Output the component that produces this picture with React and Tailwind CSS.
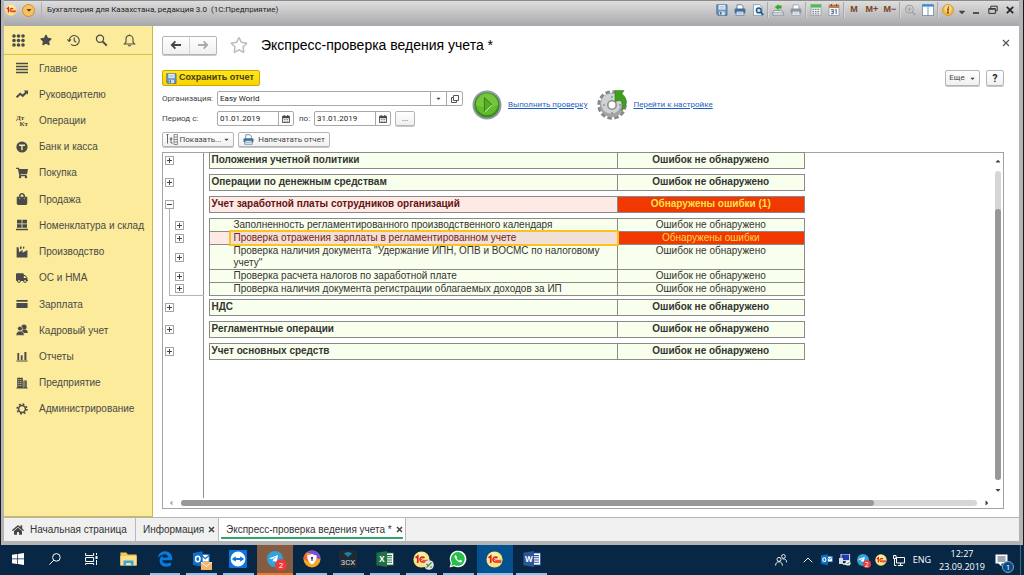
/**
 * App - accounting desktop: application window with the section sidebar,
 * the express check report and the system taskbar underneath.
 *
 * @component
 */
import React, { useState } from 'react'
import {
  FaStar, FaRegStar, FaShoppingCart, FaShoppingBag, FaTruck, FaHome, FaTelegramPlane, FaCaretDown, FaCaretUp, FaCaretLeft, FaCaretRight,
} from 'react-icons/fa'
import { FaEdgeLegacy } from 'react-icons/fa6'

/* ---------- Shared icons ---------- */

function OneC({ className }) {
  return (
    <svg viewBox="0 0 20 20" className={className} aria-hidden="true">
      <circle cx="10" cy="10" r="9.5" fill="#fbe27a" />
      <circle cx="9" cy="8" r="6.5" fill="#fdf0a8" />
      <path d="M3 8.2L5.6 6v8" fill="none" stroke="#d9201c" strokeWidth="2" />
      <path d="M13.6 8.2a3 3 0 1 0-2.4 4.8H18" fill="none" stroke="#d9201c" strokeWidth="1.8" />
      <path d="M12.2 9a1.2 1.2 0 1 0-1 2H18" fill="none" stroke="#d9201c" strokeWidth="1" />
    </svg>
  )
}

function Floppy({ className }) {
  return (
    <svg viewBox="0 0 12 12" className={className} aria-hidden="true">
      <path d="M1 .8h10v10.6H2L.8 10.2V.8z" fill="#6d93bd" stroke="#44698f" strokeWidth=".8" />
      <rect x="2.6" y="1" width="6.8" height="4.6" fill="#e9f1f8" />
      <path d="M3.6 2.6h4.8M3.6 4.1h4.8" stroke="#8fb0cf" strokeWidth=".7" />
      <rect x="3.2" y="7.4" width="5.6" height="3.8" fill="#d3dde6" />
      <rect x="4" y="8" width="1.5" height="2.6" fill="#44698f" />
    </svg>
  )
}

function Printer({ className, body = '#3f6d97' }) {
  return (
    <svg viewBox="0 0 12 12" className={className} aria-hidden="true">
      <path d="M3 5V.8h4.6L9 2.2V5" fill="#fff" stroke={body} strokeWidth=".8" />
      <rect x=".6" y="4.6" width="10.8" height="4.6" rx="1.2" fill={body} />
      <path d="M2.6 7.2h6.8l.8 4H1.8z" fill="#f2f6fa" stroke={body} strokeWidth=".7" />
      <path d="M3.4 9h5.2" stroke={body} strokeWidth=".6" />
    </svg>
  )
}

function CalendarIcon() {
  return (
    <svg viewBox="0 0 9 9" className="size-2" aria-hidden="true">
      <path d="M.5 1.5h8v7h-8z" fill="none" stroke="#444" />
      <path d="M.5 1.5h8V3.6h-8z" fill="#444" />
      <path d="M2.5 0v2M6.5 0v2" stroke="#444" strokeWidth="1.2" />
      <path d="M2 5h5M2 7h5" stroke="#444" strokeWidth="1" strokeDasharray="1 1" />
    </svg>
  )
}

/* ---------- Title bar ---------- */

const titleTools = [
  { id: 'Сохранить', icon: <Floppy className="size-3" /> },
  { id: 'Печать', icon: <Printer className="size-3" /> },
  {
    id: 'Предварительный просмотр',
    icon: (
      <svg viewBox="0 0 12 12" className="size-3">
        <path d="M1.4.6h6l2.6 2.6v8.2H1.4z" fill="#f7fafc" stroke="#7c93a8" strokeWidth=".8" />
        <circle cx="6.8" cy="6.4" r="2.4" fill="#bfe0f2" stroke="#1e5785" strokeWidth="1.4" />
        <path d="M8.6 8.2l2.6 2.8" stroke="#1e5785" strokeWidth="1.8" />
      </svg>
    ),
  },
  'sep',
  {
    id: 'Получить',
    icon: (
      <svg viewBox="0 0 12 12" className="size-3">
        <path d="M2.4 6.4h7.2l1.8 2.2v2.6H.6V8.6z" fill="#e4e7ea" stroke="#7f8a94" strokeWidth=".8" />
        <path d="M.8 8.8h10.4" stroke="#7f8a94" strokeWidth=".7" />
        <path d="M6.6.2v1.4h3v3h-3v1.6L2.8 3.1z" fill="#2faa2a" />
      </svg>
    ),
  },
  { id: 'Параметры печати', icon: <Printer className="size-3" body="#8b95a0" /> },
  'sep',
  {
    id: 'Калькулятор',
    icon: (
      <svg viewBox="0 0 12 12" className="size-3">
        <rect x="1" y=".6" width="10" height="11" fill="#eef0f2" stroke="#8d959c" strokeWidth=".7" />
        <rect x="1" y=".6" width="10" height="3" fill="#4fbf52" />
        <path d="M2.4 5.4h7.6M2.4 7.6h7.6M2.4 9.8h7.6" stroke="#7b858e" strokeWidth="1.3" strokeDasharray="1.6 .9" />
      </svg>
    ),
  },
  {
    id: 'Календарь',
    icon: (
      <svg viewBox="0 0 12 12" className="size-3">
        <rect x="1" y="1" width="10" height="10.4" fill="#f6f8fa" stroke="#8593a3" strokeWidth=".7" />
        <rect x="1" y="1" width="10" height="3" fill="#c9793a" />
        <path d="M3.4 0v2M8.6 0v2" stroke="#5a3a20" strokeWidth=".9" />
        <path d="M3 5.6h2.3v4.2H3M3.4 7.6h1.8M7 6.2l1.2-.8v4.6" fill="none" stroke="#3d5878" strokeWidth=".9" />
      </svg>
    ),
  },
  'sep',
  { id: 'M', label: 'M' },
  { id: 'M+', label: 'M+' },
  { id: 'M-', label: 'M−' },
  'sep',
  {
    id: 'Масштаб',
    icon: (
      <svg viewBox="0 0 12 12" className="size-3" fill="none" stroke="#9a9da1">
        <circle cx="5.4" cy="5.2" r="4" />
        <path d="M5.4 3v4.4M3.2 5.2h4.4" strokeWidth=".9" />
        <path d="M8.4 8.2l2.8 2.8" strokeWidth="1.4" />
      </svg>
    ),
  },
  {
    id: 'Панели',
    icon: (
      <svg viewBox="0 0 12 12" className="size-3">
        <rect x=".5" y=".6" width="11" height="10.8" fill="#fff" stroke="#6f8ba6" strokeWidth=".8" />
        <rect x=".5" y=".6" width="11" height="2" fill="#2f8be0" />
        <path d="M6 2.6v8.8" stroke="#6f8ba6" strokeWidth=".9" />
      </svg>
    ),
  },
  'sep',
  {
    id: 'О программе',
    icon: (
      <svg viewBox="0 0 12 12" className="size-3">
        <circle cx="6" cy="6" r="5.5" fill="#f6b93c" stroke="#c98a1c" strokeWidth=".7" />
        <circle cx="6" cy="4.6" r="3.6" fill="#fbd77e" />
        <path d="M6.4 2.4v1.3M5 5.2h1.4L5.6 9h1.2" fill="none" stroke="#5c4a28" strokeWidth="1.2" />
      </svg>
    ),
  },
]

function TitleBar() {
  return (
    <header className="h-[26px] shrink-0 border-t border-[#8b8b8b] bg-linear-to-b from-[#dedede] via-[#c3c3c5] to-[#a6a7aa]">
      <div className="flex h-[18px] items-center">
        <OneC className="mx-px size-3" />
        <button aria-label="Главное меню" className="ml-1 flex size-[13px] items-center justify-center rounded-full border border-[#d08f2c] bg-[#f8c062]">
          <FaCaretDown className="size-2 text-[#5d4526]" />
        </button>
        <span className="ml-1.5 h-4 w-px bg-[#b0b0b0]" />
        <h1 className="ml-[5px] grow truncate font-['Roboto',sans-serif] text-[8px] text-[#222]">
          Бухгалтерия для Казахстана, редакция 3.0&nbsp; (1С:Предприятие)
        </h1>
        {titleTools.map((t, i) =>
          t === 'sep' ? (
            <span key={i} className="h-4 w-0.5 shrink-0 border-l border-[#a9a9a9] bg-[#d5d5d5]" />
          ) : (
            <button key={t.id} aria-label={t.id} className="flex w-[18px] shrink-0 items-center justify-center text-[9px] font-bold text-[#7a4320]">
              {t.label || t.icon}
            </button>
          )
        )}
        <button aria-label="Ещё команды" className="flex w-2.5 shrink-0 justify-center pt-1"><FaCaretDown className="size-2.5 text-[#444]" /></button>
        <button aria-label="Свернуть" className="flex w-[18px] shrink-0 justify-center">
          <svg viewBox="0 0 10 10" className="size-2.5"><path d="M2 8h6" stroke="#333" strokeWidth="1.6" /></svg>
        </button>
        <button aria-label="Восстановить" className="flex w-4 shrink-0 justify-center">
          <svg viewBox="0 0 10 10" className="size-2.5" fill="none" stroke="#333">
            <path d="M2.8 3V1.2h6.4v4.6H7.6" />
            <path d="M.8 3.6h6.6v4.8H.8z" /><path d="M.8 4.2h6.6" />
          </svg>
        </button>
        <button aria-label="Закрыть" className="flex w-[18px] shrink-0 justify-center">
          <svg viewBox="0 0 10 10" className="size-2.5"><path d="M1.8 1.8l6.4 6.4M8.2 1.8L1.8 8.2" stroke="#222" strokeWidth="1.7" /></svg>
        </button>
      </div>
    </header>
  )
}

/* ---------- Sidebar ---------- */

const sections = [
  { name: 'Главное', icon: <path d="M0 1.5h12M0 4.5h12M0 7.5h12M0 10.5h12" stroke="currentColor" strokeWidth="1.4" /> },
  {
    name: 'Руководителю',
    icon: (
      <>
        <path d="M.6 9.4l3.6-3.6 2.6 2L10.6 4" fill="none" stroke="currentColor" strokeWidth="2" />
        <path d="M7.6 2.4H12v4.4z" />
      </>
    ),
  },
  {
    name: 'Операции',
    icon: (
      <g fontFamily="Liberation Serif, serif" fontWeight="700" fontSize="7">
        <text x="0" y="5">Дт</text>
        <text x="3.6" y="11.4">Кт</text>
      </g>
    ),
  },
  {
    name: 'Банк и касса',
    icon: (
      <>
        <circle cx="6" cy="6" r="5.6" />
        <path d="M3 4.2h6M6 4.2v5" stroke="#fbeb9b" strokeWidth="1.4" />
      </>
    ),
  },
  { name: 'Покупка', Icon: FaShoppingCart },
  { name: 'Продажа', Icon: FaShoppingBag },
  {
    name: 'Номенклатура и склад',
    icon: <path d="M1 .8h4.6v3.6H1zM6.4.8H11v3.6H6.4zM1 5.2h4.6v3.6H1zM6.4 5.2H11v3.6H6.4zM0 9.8h12v1.4H0z" />,
  },
  {
    name: 'Производство',
    icon: <path d="M.6 11.4V1.2h2l.5 5L6.6 3.8v3L11.4 4v7.4zM4 .6h1.6v2L4 3.4zM7 .8l1.2-.4.2 1.8L7 3z" />,
  },
  { name: 'ОС и НМА', Icon: FaTruck },
  { name: 'Зарплата', icon: <path d="M.4 2h11.2v1.8H.4zM.4 5h11.2v5H.4z" /> },
  {
    name: 'Кадровый учет',
    icon: (
      <>
        <circle cx="8" cy="3" r="2.6" />
        <path d="M5.6 9c0-3 1-3.6 2.6-3.6 2.4 0 3.6 1 3.6 3.6z" />
        <circle cx="4" cy="4.6" r="2.4" stroke="#fbeb9b" strokeWidth=".6" />
        <path d="M0 11.4C0 8.6 1.6 7 4 7s4.2 1.6 4.2 4.4z" stroke="#fbeb9b" strokeWidth=".6" />
      </>
    ),
  },
  { name: 'Отчеты', icon: <path d="M1.4 3h1.8v7H1.4zM4.8 5.2h1.8V10H4.8zM8.4 2h2v8h-2zM.4 10.4h11.2v1H.4z" /> },
  {
    name: 'Предприятие',
    icon: (
      <>
        <path d="M1.2.8h5.6v10.4H1.2zM7.4 3.4h3.4v7.8H7.4zM.4 10.6h11.2v.8H.4z" />
        <path d="M2.2 2.6h3.8M2.2 4.6h3.8M2.2 6.6h3.8M2.2 8.6h3.8M8 5h2.2M8 7h2.2M8 9h2.2" stroke="#fbeb9b" strokeWidth=".7" strokeDasharray="1.2 .6" />
      </>
    ),
  },
  {
    name: 'Администрирование',
    icon: (
      <>
        <circle cx="6" cy="6" r="3.4" fill="none" stroke="currentColor" strokeWidth="1.5" />
        <circle cx="6" cy="6" r="4.9" fill="none" stroke="currentColor" strokeWidth="1.6" strokeDasharray="1.8 2.05" />
      </>
    ),
  },
]

function Sidebar() {
  return (
    <aside className="w-[149px] shrink-0 border-r border-b border-[#c9b94a] bg-[#fbeb9b] text-[#4a4a4a]">
      <div className="flex h-[29px] items-center border-b border-[#d9c33a]">
        <button aria-label="Меню функций" className="flex w-7 justify-center">
          <svg viewBox="0 0 13 13" className="size-[13px]" fill="currentColor">
            {[2, 6.5, 11].map(y => [2, 6.5, 11].map(x => <circle key={`${x}-${y}`} cx={x} cy={y} r="1.8" />))}
          </svg>
        </button>
        <button aria-label="Избранное" className="flex w-[27px] justify-center"><FaStar className="size-3" /></button>
        <button aria-label="История" className="flex w-7 justify-center">
          <svg viewBox="0 0 13 13" className="size-[13px]" fill="none" stroke="currentColor" strokeWidth="1.1">
            <path d="M2.2 6.5A5 5 0 1 1 4 10.4" />
            <path d="M.4 5.4l1.8 2 1.8-2" />
            <path d="M7.2 3.6v3.2l2 1.4" />
          </svg>
        </button>
        <button aria-label="Поиск" className="flex w-7 justify-center">
          <svg viewBox="0 0 13 13" className="size-[13px]" fill="none" stroke="currentColor">
            <circle cx="5" cy="4.8" r="3.6" strokeWidth="1.2" />
            <path d="M7.8 7.6l4 4" strokeWidth="2" />
          </svg>
        </button>
        <button aria-label="Уведомления" className="flex w-7 justify-center">
          <svg viewBox="0 0 13 13" className="size-[13px]" fill="none" stroke="currentColor" strokeWidth="1.1">
            <path d="M1.4 10h10.2L10 8V5a3.5 3.5 0 0 0-7 0v3z" />
            <path d="M6.5.4v1.4M5 11.8h3" />
          </svg>
        </button>
      </div>
      <nav>
        <ul className="grid h-[367px] auto-rows-fr">
          {sections.map(({ name, icon, Icon }) => (
            <li key={name} className="flex">
              <a href="#" className="flex items-center gap-[11px] pl-3 text-[10px] whitespace-nowrap">
                {Icon ? (
                  <Icon className="size-3" />
                ) : (
                  <svg viewBox="0 0 12 12" className="size-3 shrink-0" fill="currentColor" aria-hidden="true">{icon}</svg>
                )}
                {name}
              </a>
            </li>
          ))}
        </ul>
      </nav>
    </aside>
  )
}

/* ---------- Report ---------- */

const OK = 'Ошибок не обнаружено'

const report = [
  { name: 'Положения учетной политики', status: OK },
  { name: 'Операции по денежным средствам', status: OK },
  {
    name: 'Учет заработной платы сотрудников организаций',
    status: 'Обнаружены ошибки (1)',
    error: true,
    checks: [
      { name: 'Заполненность регламентированного производственного календаря', status: OK },
      { name: 'Проверка отражения зарплаты в регламентированном учете', status: 'Обнаружены ошибки', error: true },
      { name: 'Проверка наличия документа "Удержание ИПН, ОПВ и ВОСМС по налоговому учету"', status: OK, tall: true },
      { name: 'Проверка расчета налогов по заработной плате', status: OK },
      { name: 'Проверка наличия документа регистрации облагаемых доходов за ИП', status: OK },
    ],
  },
  { name: 'НДС', status: OK },
  { name: 'Регламентные операции', status: OK },
  { name: 'Учет основных средств', status: OK },
]

function Toggle({ open, onClick, label }) {
  return (
    <button onClick={onClick} aria-label={label} className="block size-[9px] shrink-0 border border-[#a5a5a5] bg-white">
      <svg viewBox="0 0 7 7" className="size-[7px]" stroke="#444">
        <path d={open ? 'M1 3.5h5' : 'M1 3.5h5M3.5 1v5'} />
      </svg>
    </button>
  )
}

function GroupRows({ group }) {
  const [open, setOpen] = useState(Boolean(group.checks))
  const checks = open && group.checks ? group.checks : []
  return (
    <tbody>
      <tr className="h-4">
        <td colSpan={2} className="border-r border-[#8f8f8f] align-top">
          <div className="flex h-4 flex-col items-start pt-[3px] pl-0.5">
            <Toggle open={checks.length > 0} onClick={() => setOpen(!open)} label={group.name} />
            {checks.length > 0 && <span className="ml-1 w-px grow bg-[#b5b5b5]" />}
          </div>
        </td>
        <td />
        <td className={`border border-[#8a8a8a] pt-px pl-0.5 align-top font-bold ${group.error ? 'bg-[#ffe9e4] text-[#5f1414]' : 'bg-[#f8ffec]'}`}>
          {group.name}
        </td>
        <td className={`border border-[#8a8a8a] pt-px text-center align-top font-bold ${group.error ? 'bg-[#f03800] text-[#ffe04a]' : 'bg-[#f8ffec]'}`}>
          {group.status}
        </td>
      </tr>
      <tr className="h-1.5">
        <td />
        <td className={`border-r border-r-[#8f8f8f] ${checks.length ? 'border-l border-l-[#b5b5b5]' : ''}`} />
        <td colSpan={3} />
      </tr>
      {checks.map((c, i) => (
        <tr key={c.name} className={c.tall ? 'h-[25px]' : 'h-[13px]'}>
          <td />
          <td className={`border-r border-l border-r-[#8f8f8f] border-l-[#b5b5b5] pl-[5px] align-middle ${i === checks.length - 1 ? 'border-b border-b-[#b5b5b5]' : ''}`}>
            <Toggle label={c.name} />
          </td>
          <td />
          <td className={`border border-[#8a8a8a] pl-6 align-top ${c.error ? 'relative bg-[#ffe9e4] text-[#7a2020]' : 'bg-[#f8ffec]'}`}>
            {c.error && <span className="absolute -inset-y-0.5 -right-0.5 left-[19px] border-2 border-[#fbc31f] bg-[#d8d0c0]/35" />}
            <span className="relative block">{c.name}</span>
          </td>
          <td className={`border border-[#8a8a8a] text-center align-top ${c.error ? 'bg-[#f03800] text-[#ffd94a]' : 'bg-[#f8ffec]'}`}>
            {c.status}
          </td>
        </tr>
      ))}
      {checks.length > 0 && (
        <tr className="h-1">
          <td colSpan={2} className="border-r border-[#8f8f8f]" />
          <td colSpan={3} />
        </tr>
      )}
    </tbody>
  )
}

function Report() {
  return (
    <section className="flex min-h-0 grow flex-col border border-[#a3a3a3]">
      <div className="flex min-h-0 grow">
        <div className="-mt-px flex min-w-0 grow flex-col">
          <table className="w-[642px] table-fixed border-collapse text-[10px] leading-3 text-[#333]">
            <colgroup>
              <col className="w-1.5" />
              <col className="w-[34px]" />
              <col className="w-1.5" />
              <col className="w-[408px]" />
              <col />
            </colgroup>
            {report.map(g => <GroupRows key={g.name} group={g} />)}
          </table>
          {/* Outline gutter below the last row */}
          <div className="w-[41px] grow border-r border-[#8f8f8f]" />
        </div>
        {/* Vertical scrollbar */}
        <div className="flex w-2.5 flex-col items-center pt-1">
          <FaCaretUp className="size-2 text-[#444]" />
          <div className="my-1.5 flex w-1.5 grow flex-col rounded-full bg-[#d6d6d6] pt-[38px]">
            <div className="grow rounded-full bg-[#989898]" />
          </div>
          <FaCaretDown className="mb-1 size-2 text-[#444]" />
        </div>
      </div>
      {/* Horizontal scrollbar */}
      <div className="flex h-2.5 shrink-0 items-center pr-3 pl-1">
        <FaCaretLeft className="size-2 text-[#b0b0b0]" />
        <div className="mx-1.5 flex h-1.5 grow rounded-full bg-[#d6d6d6]">
          <div className="w-[87%] rounded-full bg-[#989898]" />
        </div>
        <FaCaretRight className="size-2 text-[#444]" />
      </div>
    </section>
  )
}

/* ---------- Main form ---------- */

const button = 'flex items-center justify-center rounded-xs border border-[#b5b5b5] bg-linear-to-b from-white to-[#f0f0f0] shadow-[0_1px_0_#c9c9c9]'

function DateField({ id, value }) {
  return (
    <div className="flex h-[15px] w-[77px] rounded-xs border border-[#a9a9a9] bg-white">
      <input id={id} defaultValue={value} className="w-[60px] min-w-0 pl-0.5 text-[#222] outline-none" />
      <button aria-label="Выбрать дату" className="flex grow items-center justify-center border-l border-[#a9a9a9]"><CalendarIcon /></button>
    </div>
  )
}

function MainForm() {
  return (
    <main className="flex min-w-0 grow flex-col bg-white pt-2 pr-[15px] pb-2 pl-[9px] font-['Roboto',sans-serif] text-[8px] text-[#444]">
      {/* Heading */}
      <div className="flex h-[22px] items-center font-['Liberation_Sans',sans-serif]">
        <div className="flex h-[19px] w-[55px] rounded-xs border border-[#b5b5b5] bg-linear-to-b from-white to-[#f0f0f0] shadow-[0_1px_0_#c9c9c9]">
          {[['Назад', '#444', 'M11 5H2M5.4 1.4L1.8 5l3.6 3.6'], ['Вперед', '#aaa', 'M1 5h9M6.6 1.4L10.2 5 6.6 8.6']].map(([name, color, d]) => (
            <button key={name} aria-label={name} className="flex flex-1 items-center justify-center border-[#d5d5d5] first:border-r">
              <svg viewBox="0 0 12 10" className="h-2.5 w-3" fill="none" stroke={color} strokeWidth="1.8"><path d={d} /></svg>
            </button>
          ))}
        </div>
        <button aria-label="В избранное" className="ml-[13px]">
          <FaRegStar className="size-[18px] text-[#b9bec6]" />
        </button>
        <h2 className="ml-[13px] grow text-[14px] text-black">Экспресс-проверка ведения учета *</h2>
        <button aria-label="Закрыть форму" className="-mr-1.5 mb-1">
          <svg viewBox="0 0 8 8" className="size-2" stroke="#555" strokeWidth="1.2"><path d="M1 1l6 6M7 1L1 7" /></svg>
        </button>
      </div>

      {/* Commands */}
      <div className="mt-3.5 flex items-center gap-1.5">
        <button className="flex h-4 w-[98px] items-center gap-0.5 rounded-xs border border-[#c9a800] bg-linear-to-b from-[#ffe61a] to-[#f6d400] pl-[3px] font-['Liberation_Sans',sans-serif] text-[9px] font-bold whitespace-nowrap text-[#443c10]">
          <Floppy className="size-[11px] shrink-0" />
          Сохранить отчет
        </button>
        <span className="grow" />
        <button className={`${button} h-4 w-[35px] gap-1`}>Еще <FaCaretDown className="size-[7px]" /></button>
        <button className={`${button} h-4 w-[18px] text-[10px] font-bold text-[#222]`}>?</button>
      </div>

      {/* Parameters */}
      <div className="mt-1 flex h-[37px] items-start">
        <div className="flex w-[302px] shrink-0 flex-col gap-[5px] pt-px">
          <div className="flex h-[15px] items-center">
            <label htmlFor="org" className="w-[55px]">Организация:</label>
            <div className="flex h-[15px] w-[246px] rounded-xs border border-[#a9a9a9] bg-white">
              <input id="org" defaultValue="Easy World" className="min-w-0 grow pl-0.5 text-[#222] outline-none" />
              <button aria-label="Выбрать из списка" className="flex w-4 items-center justify-center border-l border-[#a9a9a9]"><FaCaretDown className="size-[7px]" /></button>
              <button aria-label="Открыть" className="flex w-4 items-center justify-center border-l border-[#a9a9a9]">
                <svg viewBox="0 0 8 8" className="size-2" fill="none" stroke="#555"><path d="M2.5.5h5v5h-5zM2.5 2.5h-2v5h5v-2" /></svg>
              </button>
            </div>
          </div>
          <div className="flex h-[15px] items-center">
            <label htmlFor="from" className="w-[55px]">Период с:</label>
            <DateField id="from" value="01.01.2019" />
            <label htmlFor="to" className="w-5 pl-[5px]">по:</label>
            <DateField id="to" value="31.01.2019" />
            <button className={`${button} ml-1 h-[15px] w-5`} aria-label="Выбрать период">...</button>
          </div>
        </div>
        <div className="flex items-center gap-1.5 pl-2">
          <svg viewBox="0 0 30 30" className="size-[30px]" aria-hidden="true">
            <circle cx="15" cy="15" r="14.5" fill="#8e9bad" />
            <circle cx="15" cy="15" r="12.6" fill="#3d8f1a" />
            <circle cx="15" cy="14" r="11" fill="#62bb2b" />
            <path d="M4 15a11 11 0 0 1 22 0c-6 3-16 3-22 0z" fill="#8ad24f" opacity=".5" />
            <path d="M12.4 7.6v14.8l8-7.4z" fill="#55ab25" stroke="#2d7411" strokeWidth=".8" />
            <path d="M12.4 22.4l8-7.4" stroke="#d9f5c4" />
          </svg>
          <a href="#" className="text-[#1f5fc4] underline">Выполнить проверку</a>
        </div>
        <div className="flex items-center gap-1.5 pl-2.5">
          <svg viewBox="0 0 30 30" className="size-[30px]" aria-hidden="true">
            <circle cx="15" cy="15" r="13" fill="none" stroke="#85878a" strokeWidth="3.4" strokeDasharray="4.4 2.4" />
            <circle cx="15" cy="15" r="12.2" fill="#a2a4a6" />
            <circle cx="14" cy="13.6" r="10" fill="#cfd1d3" />
            <circle cx="15" cy="15" r="5" fill="#8d8f91" />
            <circle cx="15" cy="15" r="3.4" fill="#fff" />
            <g fill="#8d8f91"><circle cx="15" cy="7" r=".9" /><circle cx="7" cy="15" r=".9" /><circle cx="15" cy="23" r=".9" /><circle cx="23" cy="15" r=".9" /></g>
            <path d="M18 .5h9l-2 3.2C31 8.6 31 16 24.4 20.6c2-4.6 1.4-8.2-1-10.2L18 11.5z" fill="#3f9d20" stroke="#2d7411" strokeWidth=".5" />
          </svg>
          <a href="#" className="text-[#1f5fc4] underline">Перейти к настройке</a>
        </div>
      </div>

      {/* Report commands */}
      <div className="my-[5px] flex gap-1">
        <button className={`${button} h-[15px] w-[72px] gap-0.5`}>
          <svg viewBox="0 0 12 11" className="h-[11px] w-3" fill="none" stroke="#666" aria-hidden="true">
            <path d="M.5.5h2M1.5.5v9M5 3v6h1.6M3.6 5h3" />
            <path d="M8 .5h3.4v10H8zM8 3h3.4M8 5.5h3.4M8 8h3.4" strokeWidth=".7" />
          </svg>
          Показать... <FaCaretDown className="size-[7px]" />
        </button>
        <button className={`${button} h-[15px] w-[92px] gap-1`}>
          <Printer className="size-[11px]" />
          Напечатать отчет
        </button>
      </div>

      <div className="flex min-h-0 grow flex-col font-['Liberation_Sans',sans-serif]">
        <Report />
      </div>
    </main>
  )
}

/* ---------- Window tabs ---------- */

function TabClose({ name }) {
  return (
    <button aria-label={`Закрыть ${name}`}>
      <svg viewBox="0 0 7 7" className="size-[7px]" stroke="#444" strokeWidth="1.5"><path d="M1 1l5 5M6 1L1 6" /></svg>
    </button>
  )
}

function WindowTabs() {
  return (
    <nav className="flex h-6 shrink-0 border-t border-[#b5b5b5] bg-[#f0f0f0] text-[10px] text-[#333]">
      <a href="#" className="flex w-[132px] items-center gap-1.5 border-r border-[#b9b9b9] pl-2">
        <FaHome className="size-3 text-[#444]" />
        Начальная страница
      </a>
      <div className="flex w-[83px] items-center gap-1 border-r border-[#b9b9b9] pl-[7px]">
        <a href="#">Информация</a>
        <TabClose name="Информация" />
      </div>
      <div className="flex w-[187px] flex-col border-r border-[#b9b9b9] bg-white px-0.5 pt-1 pb-0.5">
        <div className="flex grow items-center gap-1 pl-[5px] whitespace-nowrap">
          <a href="#">Экспресс-проверка ведения учета *</a>
          <TabClose name="Экспресс-проверка" />
        </div>
        <div className="h-0.5 bg-[#2fa567]" />
      </div>
    </nav>
  )
}

/* ---------- Taskbar ---------- */

function OutlookIcon({ className }) {
  return (
    <svg viewBox="0 0 20 20" className={className} aria-hidden="true">
      <path d="M10 4h9v9h-9z" fill="#fff" stroke="#0f6fc6" />
      <path d="M10 5l4.5 4L19 5" fill="none" stroke="#0f6fc6" strokeWidth="1.4" />
      <path d="M0 2.4L11.4.4v18.2L0 16.4z" fill="#0f6fc6" />
      <ellipse cx="5.6" cy="9.4" rx="2.6" ry="3.2" fill="none" stroke="#fff" strokeWidth="1.8" />
    </svg>
  )
}

function Office({ letter, color }) {
  return (
    <svg viewBox="0 0 18 16" className="h-4 w-[18px]" aria-hidden="true">
      <rect x="9" y="2" width="8.4" height="12" fill="#fff" stroke={color} strokeWidth=".8" />
      <path d="M11 4.6h5M11 6.8h5M11 9h5M11 11.2h5" stroke={color} strokeWidth="1.1" />
      <path d="M.4 1.8L11 0v16L.4 14.2z" fill={color} />
      <text x="5.8" y="11.2" fontSize="8" fontWeight="700" fill="#fff" textAnchor="middle" fontFamily="Open Sans, sans-serif">{letter}</text>
    </svg>
  )
}

function TelegramBadge({ className, badge }) {
  return (
    <span className={`relative flex items-center justify-center rounded-full bg-[#2fa3dd] ${className}`}>
      <FaTelegramPlane className="mr-0.5 size-3/5 text-white" />
      <span className={`absolute flex items-center justify-center rounded-full bg-[#e83c3c] leading-none text-white ${badge}`}>2</span>
    </span>
  )
}

const apps = [
  {
    name: 'Пуск',
    icon: <svg viewBox="0 0 12 12" className="size-3" fill="#fff"><path d="M0 1.7l5-.7v4.6H0zM5.7.9L12 0v5.6H5.7zM0 6.3h5v4.6l-5-.7zM5.7 6.3H12V12l-6.3-.9z" /></svg>,
  },
  {
    name: 'Поиск',
    icon: <svg viewBox="0 0 12 12" className="size-3" fill="none" stroke="#fff"><circle cx="7.4" cy="4.4" r="3.8" /><path d="M4.8 7.2L.4 11.6" /></svg>,
  },
  {
    name: 'Представление задач',
    icon: (
      <svg viewBox="0 0 13 12" className="h-3 w-[13px]" fill="none" stroke="#fff">
        <path d="M.6 0v2.5h8V0M.6 4.5h8v4h-8zM.6 12v-1.5h8V12M11.5 0v2M11.5 7v5" />
        <path d="M11.5 3v3" strokeWidth="2" />
      </svg>
    ),
  },
  {
    name: 'Проводник',
    icon: (
      <svg viewBox="0 0 17 14" className="h-3.5 w-[17px]">
        <path d="M.4.6h6l1.4 1.8h8.8v11H.4z" fill="#f3c64e" />
        <path d="M.4 4h16.2v9.4H.4z" fill="#fbe08a" />
        <path d="M3.5 14V8.5h10V14h-2.6v-3H6.1v3z" fill="#3fa4dc" />
      </svg>
    ),
  },
  { name: 'Edge', open: true, icon: <FaEdgeLegacy className="size-4 text-[#0a7bdc]" /> },
  {
    name: 'Outlook',
    open: true,
    icon: (
      <span className="relative">
        <OutlookIcon className="size-[17px]" />
        <svg viewBox="0 0 11 8" className="absolute -right-0.5 -bottom-0.5 h-2 w-[11px]">
          <rect width="11" height="8" fill="#f2b768" /><path d="M0 0l5.5 4.5L11 0" fill="none" stroke="#fff2dc" />
        </svg>
      </span>
    ),
  },
  {
    name: 'TeamViewer',
    open: true,
    icon: (
      <svg viewBox="0 0 18 18" className="size-[18px]">
        <rect width="18" height="18" rx="1" fill="#0d73dd" />
        <circle cx="9" cy="9" r="7.4" fill="#fff" />
        <path d="M2.8 9l4-2.8v1.9h4.4V6.2l4 2.8-4 2.8V9.9H6.8v1.9z" fill="#0d73dd" />
      </svg>
    ),
  },
  { name: 'Telegram', open: true, alert: true, icon: <TelegramBadge className="size-4" badge="-right-1 -bottom-1 size-3 text-[8px]" /> },
  {
    name: 'Браузер',
    open: true,
    icon: (
      <svg viewBox="0 0 18 18" className="size-[18px]">
        <circle cx="9" cy="9" r="8.5" fill="#f5a623" />
        <path d="M3 3a8.5 8.5 0 0 1 14.4 5c-1 2-3 1-4-1S7 3 3 3z" fill="#7b4fe0" />
        <path d="M.5 9A8.5 8.5 0 0 1 4 2.2C3 6 4 9 6 12z" fill="#f0603a" />
        <path d="M9 4c1.6 1 3.2 1.2 4.6 1.2 0 4.6-1 7.2-4.6 9.2-3.6-2-4.6-4.6-4.6-9.2C5.8 5.2 7.4 5 9 4z" fill="#fff" />
        <circle cx="9" cy="8" r="1.2" fill="#5b3a9c" /><path d="M9 8v3" stroke="#5b3a9c" strokeWidth="1.2" />
      </svg>
    ),
  },
  {
    name: '3CX',
    open: true,
    icon: (
      <svg viewBox="0 0 18 18" className="size-[18px]">
        <rect width="18" height="18" rx="1.5" fill="#1f2a33" />
        <path d="M5 3.5a6 6 0 0 1 8 0L9 7z" fill="#1a7fae" />
        <text x="9" y="15" fontSize="8" fill="#d6dde2" textAnchor="middle" fontFamily="Roboto, sans-serif">3CX</text>
      </svg>
    ),
  },
  { name: 'Excel', open: true, icon: <Office letter="X" color="#1f7145" /> },
  {
    name: '1С конфигуратор',
    open: true,
    icon: (
      <span className="relative">
        <OneC className="size-[17px]" />
        <svg viewBox="0 0 10 10" className="absolute -right-1 -bottom-0.5 size-2.5">
          <circle cx="5" cy="5" r="4.8" fill="#e3e3e3" /><path d="M2.5 7.5l5-5M2.5 4l2 2M6 7h2" stroke="#4c8b2c" strokeWidth="1.2" />
        </svg>
      </span>
    ),
  },
  {
    name: 'WhatsApp',
    open: true,
    icon: (
      <svg viewBox="0 0 18 18" className="size-[18px]">
        <path d="M.6 17.4L1.8 13A8.3 8.3 0 1 1 5 16.2z" fill="#fff" />
        <path d="M2.2 15.8l.9-3A6.9 6.9 0 1 1 5.3 14.9z" fill="#27c04b" />
        <path d="M6.6 5c-1 .4-1.3 1.5-.8 2.8 1 2.3 2.6 3.8 4.8 4.5 1.3.4 2.4-.2 2.6-1.5l-2-1-.9 1C9 10.2 8.2 9.4 7.6 8.2l.7-.9z" fill="#fff" />
      </svg>
    ),
  },
  { name: '1С:Предприятие', open: true, active: true, icon: <OneC className="size-[17px]" /> },
  { name: 'Word', open: true, icon: <Office letter="W" color="#2b579a" /> },
]

function appClass(app) {
  if (app.alert) return 'border-[#f07a1c] bg-[#855c42]'
  if (app.active) return 'border-[#8cc4f0] bg-[#05508f]'
  if (app.open) return 'mx-[3px] border-[#8cc4f0]'
  return 'border-transparent'
}

function Taskbar() {
  return (
    <footer className="flex h-[30px] shrink-0 items-stretch bg-[#082745] font-['Open_Sans',sans-serif] text-white">
      <div className="grid w-[550px] auto-cols-fr grid-flow-col">
        {apps.map(app => (
          <button key={app.name} aria-label={app.name} className={`flex items-center justify-center border-b-2 ${appClass(app)}`}>
            {app.icon}
          </button>
        ))}
      </div>
      <span className="grow" />
      <div className="flex items-center">
        <button aria-label="Контакты" className="mr-4">
          <svg viewBox="0 0 12 12" className="size-3" fill="none" stroke="#fff" strokeWidth=".9">
            <circle cx="4" cy="5.4" r="2" /><path d="M.6 11.6C.6 9 2 7.8 4 7.8s3.4 1.2 3.4 3.8" />
            <circle cx="8.4" cy="2.4" r="1.9" /><path d="M7.6 5c2.4-.6 4 .8 4 3.4" />
          </svg>
        </button>
        <button aria-label="Скрытые значки" className="mr-2">
          <svg viewBox="0 0 10 6" className="h-1.5 w-2.5" fill="none" stroke="#fff"><path d="M.8 5.2L5 1l4.2 4.2" /></svg>
        </button>
        <div className="flex items-center gap-1.5">
          <OutlookIcon className="size-3" />
          <svg viewBox="0 0 12 12" className="size-3">
            <rect x="2" y="0" width="8.6" height="6.6" fill="#2438b0" stroke="#dfe3ea" />
            <rect x="0" y="4" width="4" height="6" fill="#d7dbe2" />
            <path d="M4 9h7v2H4z" fill="#c5c9d0" /><circle cx="9" cy="9" r="2.6" fill="#f2f2f2" />
            <path d="M7.8 9l1 1 1.6-2" fill="none" stroke="#3a9a35" />
          </svg>
          <TelegramBadge className="size-3" badge="-right-0.5 -bottom-0.5 size-2 text-[7px]" />
          <OneC className="size-3" />
          <svg viewBox="0 0 12 11" className="h-[11px] w-3" fill="none" stroke="#fff">
            <path d="M3.5 2.5h8V8h-8zM5 10.5h5M7.5 8v2.5M1.5 4v6.5h2" />
            <path d="M.5.5H3v3H.5z" />
          </svg>
        </div>
        <span className="ml-2 text-[9px]">ENG</span>
        <time className="ml-2 text-center text-[9px] leading-[13px]">12:27<br />23.09.2019</time>
        <button aria-label="Уведомления" className="relative mr-3 ml-2.5">
          <svg viewBox="0 0 13 13" className="size-[13px]">
            <path d="M.5.5h12v9h-6v3l-3-3h-3z" fill="#fff" />
            <path d="M2.5 3h8M2.5 5h8M2.5 7h8" stroke="#082745" strokeWidth=".8" />
          </svg>
          <span className="absolute -right-1.5 -bottom-1.5 flex size-3 items-center justify-center rounded-full border border-[#7fa6c9] bg-[#0a4a85] text-[8px] leading-none">1</span>
        </button>
        <span className="mr-[3px] h-full w-px bg-[#4c6479]" />
      </div>
    </footer>
  )
}

export default function App() {
  return (
    <div className="flex h-screen flex-col overflow-hidden bg-[#1d1820] font-['Liberation_Sans',sans-serif]">
      <div className="mx-px flex min-h-0 grow flex-col border-r-4 border-b-4 border-l-[3px] border-[#b4b4b6]">
        <TitleBar />
        <div className="flex min-h-0 grow">
          <Sidebar />
          <MainForm />
        </div>
        <WindowTabs />
      </div>
      <Taskbar />
    </div>
  )
}
